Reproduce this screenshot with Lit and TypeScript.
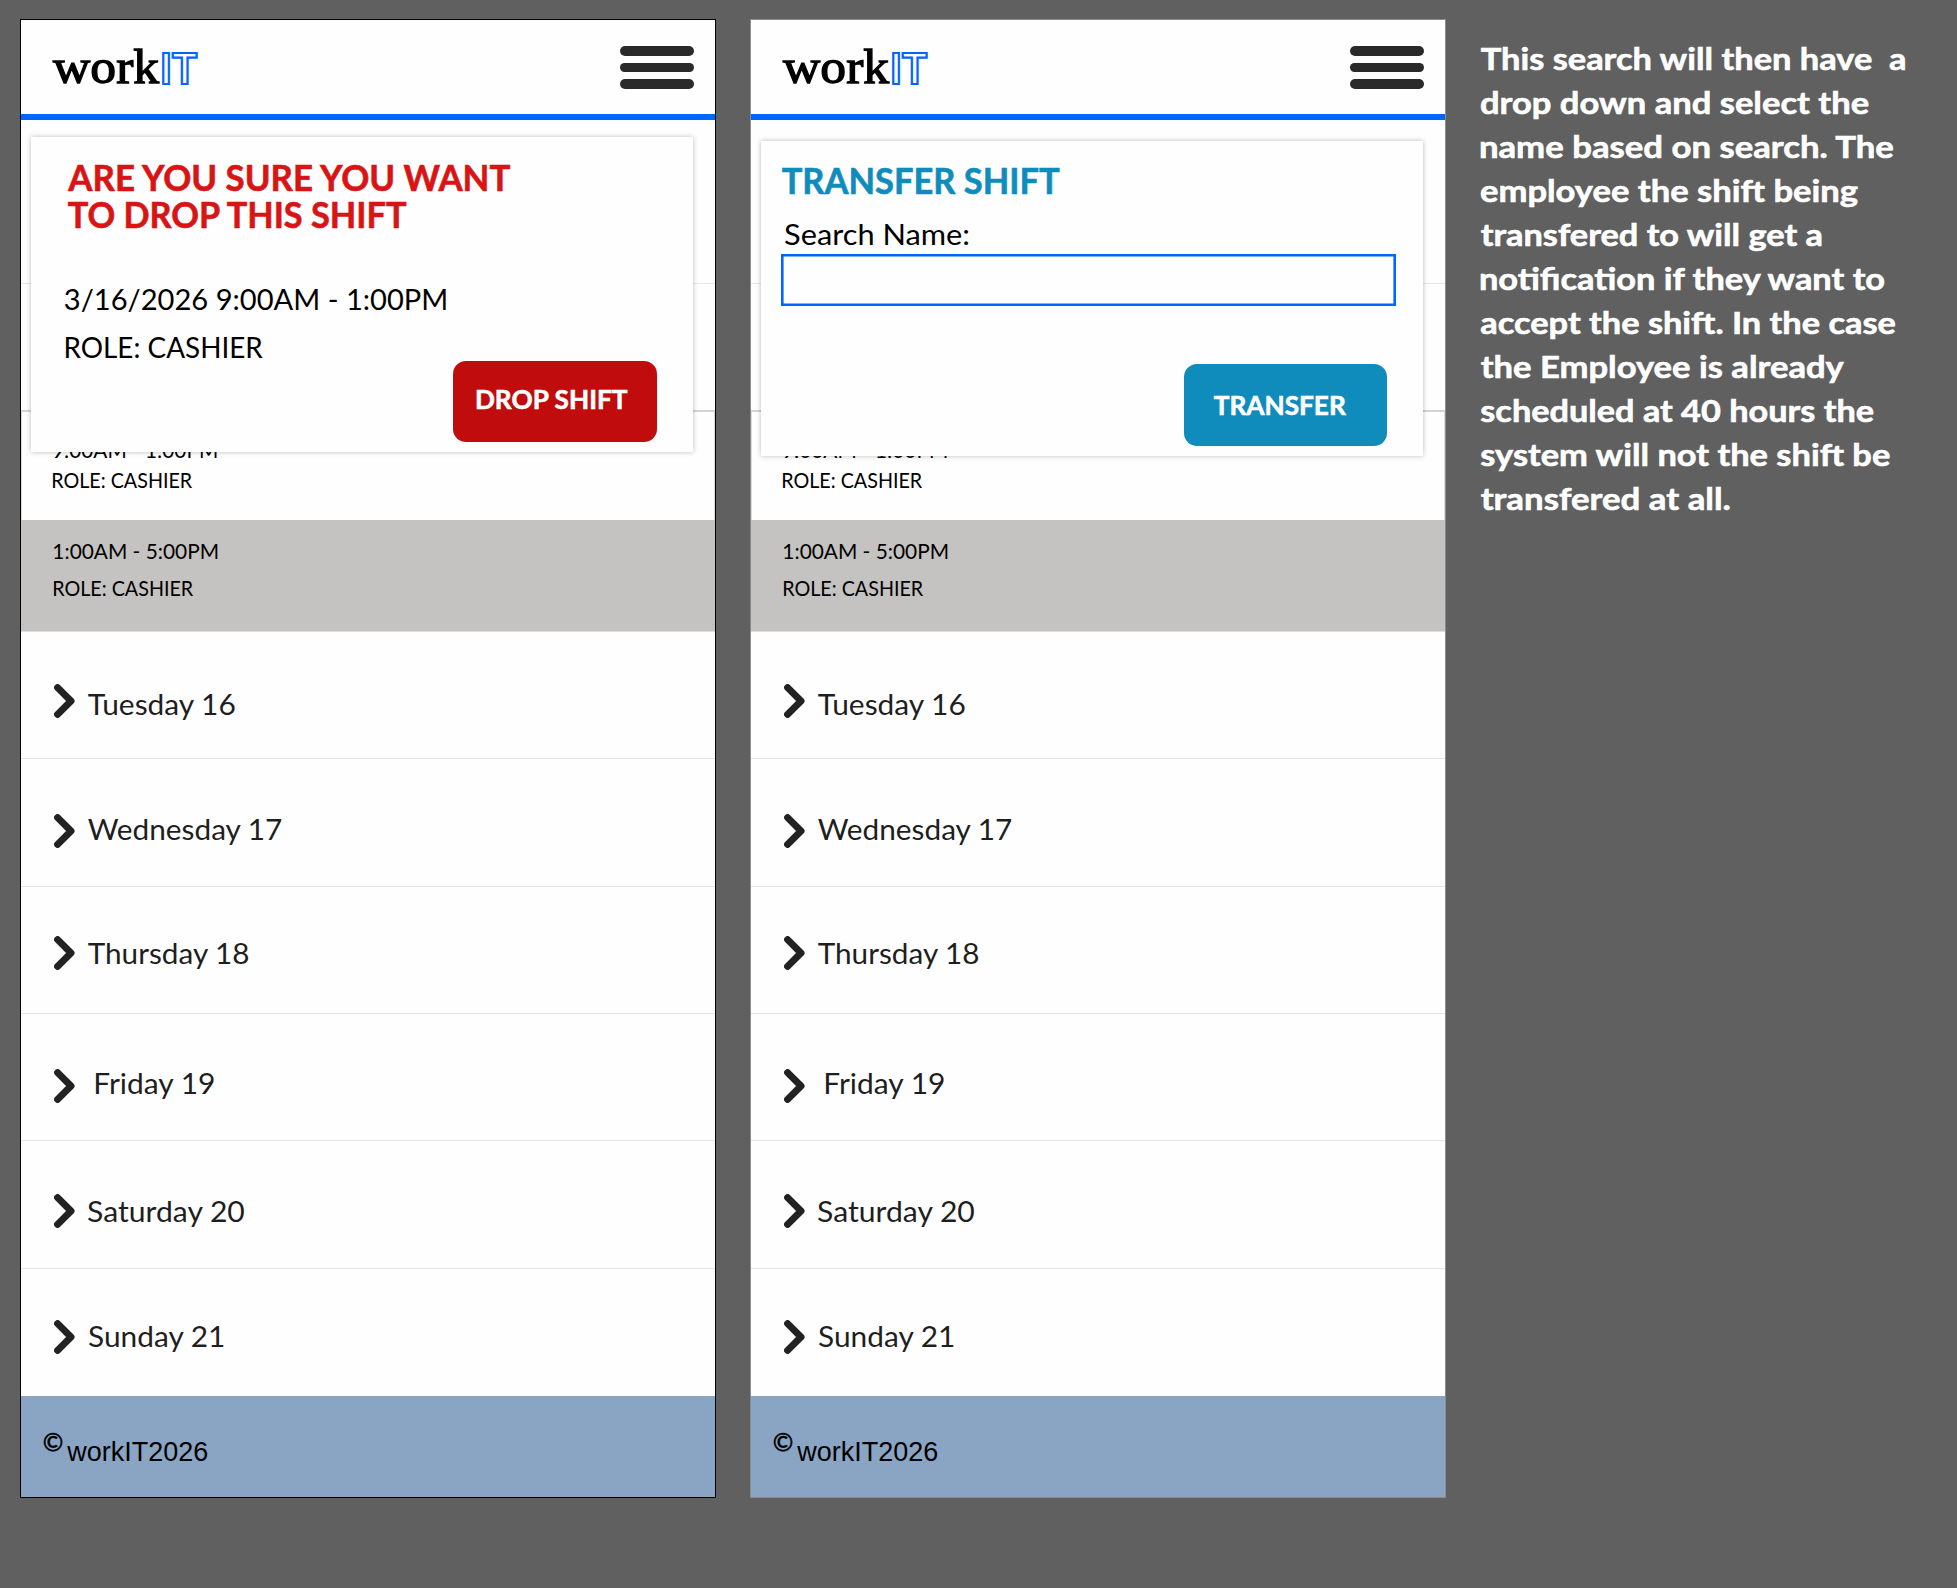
import { LitElement, html, svg, css } from "lit";
import { customElement, property } from "lit/decorators.js";
import { styleMap } from "lit/directives/style-map.js";

const measurer = document.createElement("canvas").getContext("2d")!;

/** One line of text set to a given cap height and line width. Its box is the cap box. */
@customElement("fit-text")
class FitText extends LitElement {
  static styles = css`
    :host { display: block; flex: none; }
    .line { display: block; overflow: visible; }
    .glyphs { fill: currentColor; white-space: pre; }
    .outlined { fill: none; stroke: currentColor; stroke-width: 2.2; vector-effect: non-scaling-stroke; }
    .heavier { stroke: currentColor; stroke-width: 1.3; }
    .firm { stroke: currentColor; stroke-width: 0.6; }
  `;
  @property() text = "";
  @property() family = "Lato";
  @property() look = "";
  @property({ type: Number }) weight = 400;
  @property({ type: Number }) cap = 20;
  @property({ type: Number }) width = 100;

  render() {
    const stack = `"${this.family}", sans-serif`;
    measurer.font = `${this.weight} 100px ${stack}`;
    const size = (this.cap / measurer.measureText("H").actualBoundingBoxAscent) * 100;
    const m = measurer.measureText(this.text);
    const left = (-m.actualBoundingBoxLeft * size) / 100;
    const ink = ((m.actualBoundingBoxRight + m.actualBoundingBoxLeft) * size) / 100;
    const k = this.width / ink;
    return html`<svg class="line" width=${this.width} height=${this.cap}>
      ${svg`<text class="glyphs ${this.look}" font-family=${stack} font-weight=${this.weight} font-size=${size}
        transform="translate(${-left * k} ${this.cap}) scale(${k} 1)">${this.text}</text>`}
    </svg>`;
  }
}

interface Day { name: string; icon: number; label: number; gap: number; width: number; }

const DAYS: Day[] = [
  { name: "Tuesday 16", icon: 52, label: 61.8, gap: 13.5, width: 147.4 },
  { name: "Wednesday 17", icon: 55.3, label: 59.5, gap: 13.4, width: 194.3 },
  { name: "Thursday 18", icon: 49.5, label: 56.5, gap: 13.5, width: 161.2 },
  { name: "Friday 19", icon: 54.8, label: 59.2, gap: 20.8, width: 118.5 },
  { name: "Saturday 20", icon: 53, label: 59.9, gap: 12.8, width: 156.7 },
  { name: "Sunday 21", icon: 51.4, label: 57.4, gap: 13.8, width: 135 },
];

@customElement("phone-screen")
class PhoneScreen extends LitElement {
  static styles = css`
    :host { display: block; flex: none; }
    .screen {
      box-sizing: border-box; position: relative; width: 696px; height: 1479px;
      border: 1px solid #000; background: #fefefe; color: #000;
      display: flex; flex-direction: column;
    }
    .screen.soft { border-color: #8c8c8c; }
    .top {
      box-sizing: border-box; flex: none; height: 100.3px; border-bottom: 6.3px solid #0066ff;
      display: flex; justify-content: space-between; padding: 26px 20.7px 0 32px;
    }
    .logo { display: flex; gap: 4.2px; }
    .work { margin-top: 5.4px; }
    .it { margin-top: 6.8px; color: #0066ff; }
    .bars { display: flex; flex-direction: column; gap: 6.8px; width: 74px; }
    .bar { height: 9.8px; border-radius: 5px; background: #2a2a2a; }
    .blank { box-sizing: border-box; flex: none; border-bottom: 1px solid #e6e6e6; }
    .b1 { height: 163.7px; }
    .b2 { height: 128px; border-bottom: 2px solid #d4d4d4; }
    .shift { box-sizing: border-box; flex: none; display: flex; flex-direction: column; padding-left: 32.8px; }
    .open { height: 108px; border: solid #dcdcdc; border-width: 0 1px; padding: 31px 0 0 31px; gap: 15px; }
    .taken { height: 111.8px; background: #c4c3c1; padding-top: 23.7px; gap: 22px; border-bottom: 1px solid #dedddc; }
    .day {
      box-sizing: border-box; flex: none; height: 127.4px; border-bottom: 1px solid #e4e4e4;
      display: flex; padding-left: 33px; color: #1e1e1e;
    }
    .day:last-of-type { border-bottom: 0; }
    .chevron { flex: none; display: block; width: 20.8px; height: 34px; }
    .foot { flex: 1; background: #8aa4c4; display: flex; padding-left: 23px; gap: 4.4px; }
    .mark { margin-top: 36.6px; }
    .owner { margin-top: 45.5px; }
    .panel {
      box-sizing: border-box; position: absolute; left: 10.2px; top: 117px; width: 661.5px; height: 315px;
      background: #fefefe; box-shadow: 0 0 5px rgba(0, 0, 0, 0.26); display: flex; flex-direction: column;
    }
    .soft .panel { top: 120.6px; }
    .drop { padding: 28px 0 0 37px; color: #d81414; }
    .drop .second { margin-top: 11px; }
    .when { margin: 61px 0 0 -3.2px; color: #000; }
    .role { margin: 27.5px 0 0 -2.2px; color: #000; }
    .move { padding: 27.2px 0 0 21px; color: #108cbc; }
    .ask { margin: 30.3px 0 0 2.8px; color: #000; }
    .field {
      box-sizing: border-box; margin: 9.5px 0 0 -1px; width: 614.5px; height: 52px; border: 2px solid #0066ff;
      border-radius: 0; box-shadow: inset 0 0 0 0.6px #0066ff; background: #fefefe; padding: 0 8px; font: 28px Lato, sans-serif;
    }
    .button {
      box-sizing: border-box; width: 203.3px; height: 81.3px; border: 0; border-radius: 13px; padding: 0;
      color: #fff; display: flex;
    }
    .red { background: #c00c0c; margin: 3.7px 0 0 385.3px; padding: 28.3px 0 0 23.8px; }
    .teal { background: #108cbc; margin: 58.2px 0 0 401.7px; padding: 30.7px 0 0 30.6px; }
  `;
  @property() mode: "drop" | "transfer" = "drop";

  private panel() {
    if (this.mode === "drop") {
      return html`<section class="panel drop">
        <fit-text text="ARE YOU SURE YOU WANT" look="firm" weight="700" cap="26" width="445.3"></fit-text>
        <fit-text class="second" text="TO DROP THIS SHIFT" look="firm" weight="700" cap="26" width="340.3"></fit-text>
        <fit-text class="when" text="3/16/2026 9:00AM - 1:00PM" cap="20.5" width="381"></fit-text>
        <fit-text class="role" text="ROLE: CASHIER" cap="20.5" width="197"></fit-text>
        <button class="button red"><fit-text text="DROP SHIFT" look="firm" weight="700" cap="19.9" width="151"></fit-text></button>
      </section>`;
    }
    return html`<section class="panel move">
      <fit-text text="TRANSFER SHIFT" look="firm" weight="700" cap="26" width="277.5"></fit-text>
      <fit-text class="ask" text="Search Name:" cap="20.7" width="183.2"></fit-text>
      <input class="field" aria-label="Search Name" />
      <button class="button teal"><fit-text text="TRANSFER" look="firm" weight="700" cap="19.9" width="132"></fit-text></button>
    </section>`;
  }

  render() {
    return html`<main class="screen ${this.mode === "transfer" ? "soft" : ""}">
      <header class="top">
        <div class="logo">
          <fit-text class="work" text="work" family="Liberation Serif" look="heavier" cap="32" width="106.2"></fit-text>
          <fit-text class="it" text="IT" weight="700" look="outlined" cap="30.6" width="33.8"></fit-text>
        </div>
        <div class="bars"><div class="bar"></div><div class="bar"></div><div class="bar"></div></div>
      </header>
      <div class="blank b1"></div>
      <div class="blank b2"></div>
      <div class="shift open">
        <fit-text text="9:00AM - 1:00PM" cap="15" width="163.5"></fit-text>
        <fit-text text="ROLE: CASHIER" cap="15" width="139.4"></fit-text>
      </div>
      <div class="shift taken">
        <fit-text text="1:00AM - 5:00PM" cap="15" width="163.3"></fit-text>
        <fit-text text="ROLE: CASHIER" cap="15" width="139.4"></fit-text>
      </div>
      ${DAYS.map((d) => html`<div class="day">
        <svg class="chevron" viewBox="0 0 20.8 34" style=${styleMap({ marginTop: `${d.icon}px` })}>
          <path d="M3.6 3.6 L17 17 L3.6 30.4" fill="none" stroke="#222" stroke-width="7" stroke-linecap="round" stroke-linejoin="round"></path>
        </svg>
        <fit-text text=${d.name} cap="20.9" width=${d.width}
          style=${styleMap({ marginTop: `${d.label}px`, marginLeft: `${d.gap}px` })}></fit-text>
      </div>`)}
      <footer class="foot">
        <fit-text class="mark" text="©" look="firm" cap="18.4" width="18.3"></fit-text>
        <fit-text class="owner" text="workIT2026" family="Liberation Sans" cap="19.2" width="140.3"></fit-text>
      </footer>
      ${this.panel()}
    </main>`;
  }
}

const NOTE: [string, number][] = [
  ["This search will then have  a", 424.7],
  ["drop down and select the", 387.3],
  ["name based on search. The", 413.3],
  ["employee the shift being", 377],
  ["transfered to will get a", 341.3],
  ["notification if they want to", 405.7],
  ["accept the shift. In the case", 414.3],
  ["the Employee is already", 363],
  ["scheduled at 40 hours the", 392.3],
  ["system will not the shift be", 409.3],
  ["transfered at all.", 248.7],
];

@customElement("app-root")
class AppRoot extends LitElement {
  static styles = css`
    :host { display: block; }
    .board {
      box-sizing: border-box; width: 1957px; height: 1588px; background: #606060; overflow: hidden;
      display: flex; align-items: flex-start; padding: 19px 0 0 20px; gap: 34px;
    }
    .note { display: flex; flex-direction: column; gap: 21.2px; padding: 28.2px 0 0 1.2px; color: #fff; }
  `;
  render() {
    return html`<div class="board">
      <phone-screen mode="drop"></phone-screen>
      <phone-screen mode="transfer"></phone-screen>
      <aside class="note">
        ${NOTE.map(([line, width]) => html`<fit-text text=${line} look="firm" weight="700" cap="22.8" width=${width}></fit-text>`)}
      </aside>
    </div>`;
  }
}
